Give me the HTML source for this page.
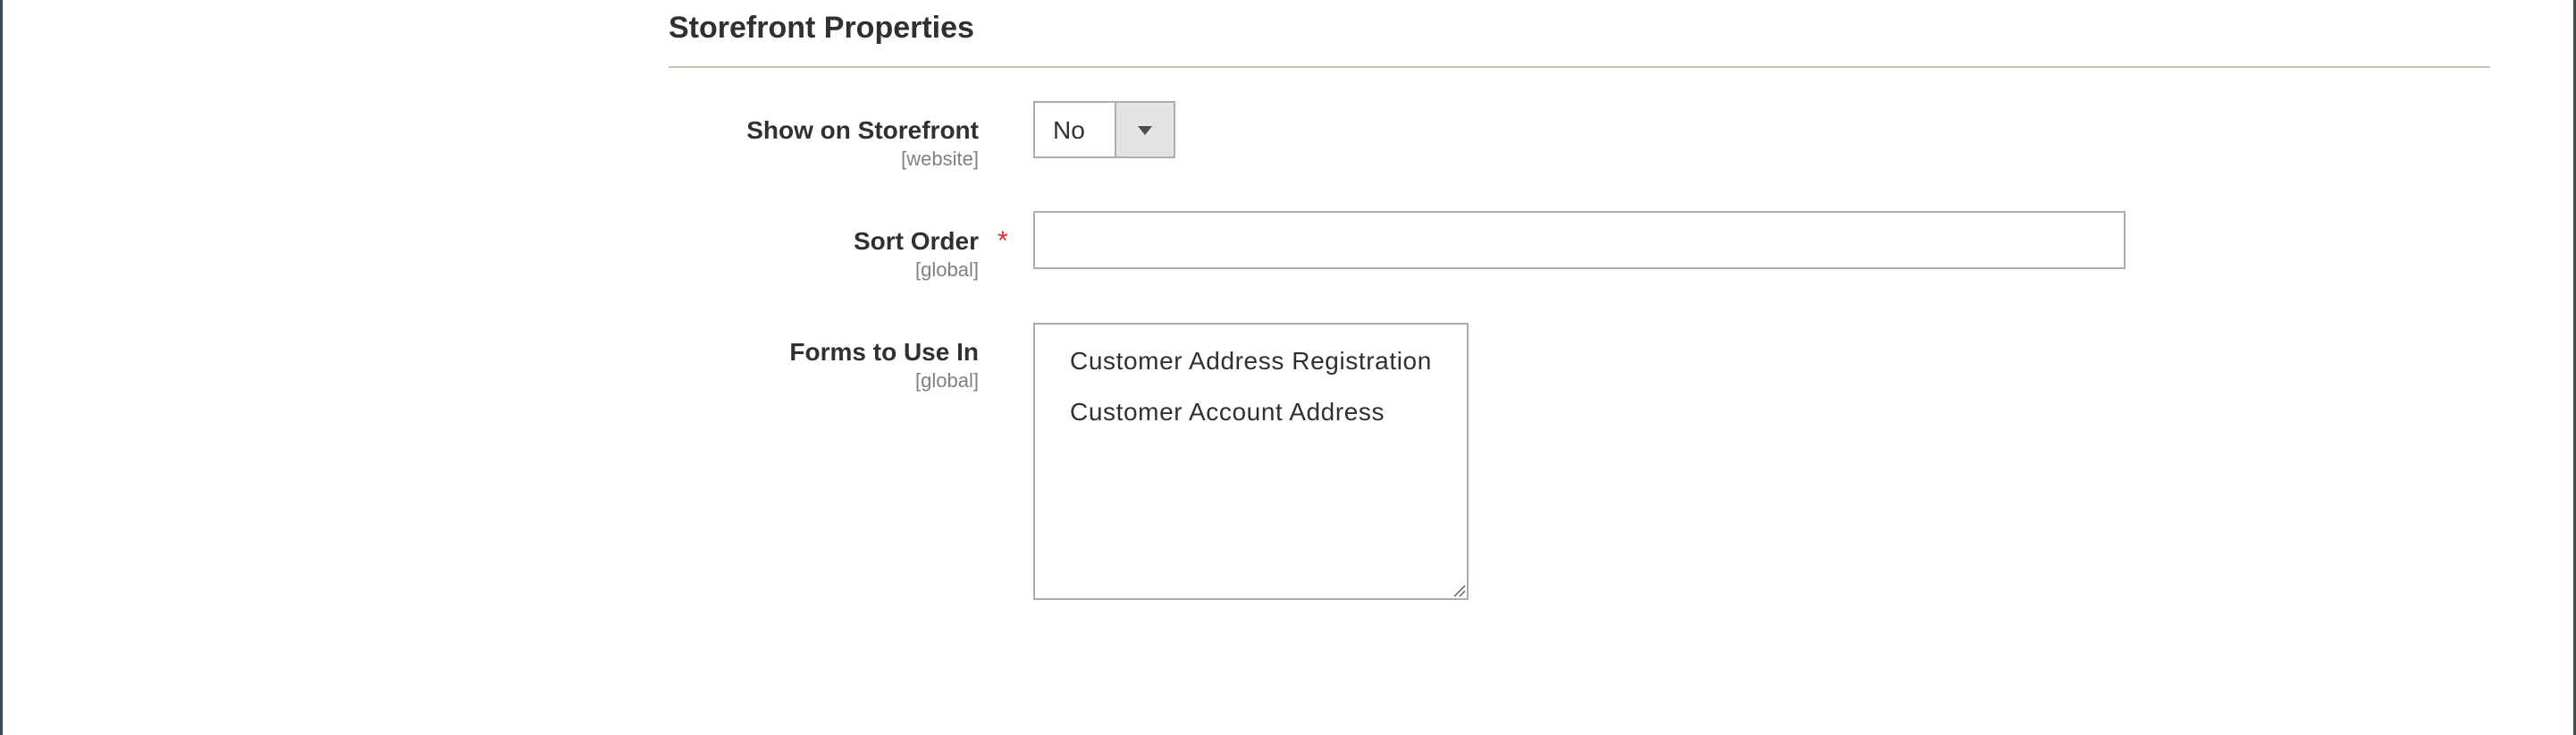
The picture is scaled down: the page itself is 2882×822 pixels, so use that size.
<!DOCTYPE html>
<html><head><meta charset="utf-8"><style>
*{margin:0;padding:0;box-sizing:border-box}
body{width:2882px;height:822px;background:#fff;position:relative;overflow:hidden;font-family:"Liberation Sans",sans-serif;color:#303030}
.bl{position:absolute;top:0;bottom:0;width:3px;background:#3d4d58}
.t{position:absolute;white-space:nowrap;line-height:1}
.lab{font-size:28px;font-weight:bold;right:1787px;color:#303030}
.sc{font-size:22px;right:1787px;color:#808080}
.box{position:absolute;border:2px solid #adadad;background:#fff}
.opt{font-size:28px;letter-spacing:0.6px}
</style></head><body>
<div class="bl" style="left:0"></div>
<div class="bl" style="right:0"></div>
<div class="t" style="left:748px;top:14px;font-size:34px;font-weight:bold;color:#303030">Storefront Properties</div>
<div style="position:absolute;left:748px;top:74px;width:2038px;height:2px;background:#cac3b4"></div>

<div class="t lab" style="top:132px">Show on Storefront</div>
<div class="t sc" style="top:167px">[website]</div>
<div class="box" style="left:1156px;top:113px;width:159px;height:64px"></div>
<div style="position:absolute;left:1247px;top:115px;width:66px;height:60px;background:#e3e3e3;border-left:2px solid #adadad"></div>
<div style="position:absolute;left:1273px;top:141px;width:0;height:0;border-left:8px solid transparent;border-right:8px solid transparent;border-top:10px solid #514943"></div>
<div class="t" style="left:1178px;top:132px;font-size:28px">No</div>

<div class="t lab" style="top:256px">Sort Order</div>
<div class="t" style="left:1116px;top:255px;font-size:30px;color:#e22626">*</div>
<div class="t sc" style="top:291px">[global]</div>
<div class="box" style="left:1156px;top:236px;width:1222px;height:65px"></div>

<div class="t lab" style="top:380px">Forms to Use In</div>
<div class="t sc" style="top:415px">[global]</div>
<div class="box" style="left:1156px;top:361px;width:487px;height:310px"></div>
<div class="t opt" style="left:1197px;top:390px">Customer Address Registration</div>
<div class="t opt" style="left:1197px;top:447px">Customer Account Address</div>
<svg style="position:absolute;left:1626px;top:654px" width="14" height="14"><path d="M1 13L13 1M7 13L13 7" stroke="#555" stroke-width="1.3"/></svg>
</body></html>
